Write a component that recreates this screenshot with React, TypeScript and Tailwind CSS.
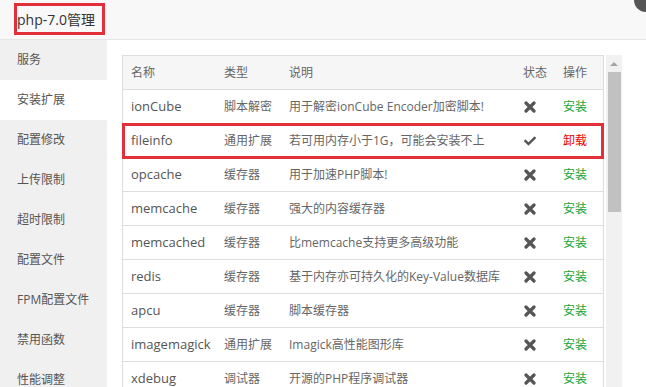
import { FaCheck } from "react-icons/fa";

const menu = ["服务", "安装扩展", "配置修改", "上传限制", "超时限制", "配置文件", "FPM配置文件", "禁用函数", "性能调整"];

const rows = [
  { name: "ionCube", type: "脚本解密", desc: "用于解密ionCube Encoder加密脚本!", on: false },
  { name: "fileinfo", type: "通用扩展", desc: "若可用内存小于1G，可能会安装不上", on: true },
  { name: "opcache", type: "缓存器", desc: "用于加速PHP脚本!", on: false },
  { name: "memcache", type: "缓存器", desc: "强大的内容缓存器", on: false },
  { name: "memcached", type: "缓存器", desc: "比memcache支持更多高级功能", on: false },
  { name: "redis", type: "缓存器", desc: "基于内存亦可持久化的Key-Value数据库", on: false },
  { name: "apcu", type: "缓存器", desc: "脚本缓存器", on: false },
  { name: "imagemagick", type: "通用扩展", desc: "Imagick高性能图形库", on: false },
  { name: "xdebug", type: "调试器", desc: "开源的PHP程序调试器", on: false },
];

function RemoveIcon() {
  return (
    <svg width="12" height="12" viewBox="0 0 12 12">
      <path d="M2 2 L10 10 M10 2 L2 10" stroke="#555" strokeWidth="3.2" strokeLinecap="round" />
    </svg>
  );
}

export default function App() {
  return (
    <div
      className="relative w-[646px] h-[387px] overflow-hidden bg-white text-[12px] text-[#666]"
      style={{ fontFamily: '"Open Sans", "Noto Sans CJK SC", sans-serif' }}
    >
      <div className="h-[40px] bg-[#f8f8f8] border-b border-[#e6e6e6] flex items-start pt-[3px] pl-[14px]">
        <div className="border-[3px] border-[#e2303a] h-[32px] pl-0 pr-[7px] flex items-center text-[14px] text-[#333]">
          php-7.0管理
        </div>
      </div>
      <div className="absolute right-[-12px] top-[-12px] w-[24px] h-[24px] rounded-full bg-[#555]" />
      <div className="flex">
        <div className="w-[107px] h-[347px] bg-[#f0f0f0] shrink-0">
          {menu.map((m, i) => (
            <div
              key={m}
              className={`h-[40px] flex items-center pl-[17px] ${i === 1 ? "bg-white" : ""} text-[#555]`}
            >
              {m}
            </div>
          ))}
        </div>
        <div className="flex-1 pl-[15px] pt-[15px] flex">
          <div className="w-[482px] border border-[#ddd] border-b-0">
            <div className="flex h-[34px] items-center bg-[#f6f6f6] border-b border-[#ddd]">
              <div className="w-[92px] pl-[8px]">名称</div>
              <div className="w-[65px] pl-[9px]">类型</div>
              <div className="w-[234px] pl-[9px]">说明</div>
              <div className="w-[40px] pl-[9px]">状态</div>
              <div className="flex-1 pl-[9px]">操作</div>
            </div>
            {rows.map((r) => (
              <div
                key={r.name}
                className={`flex h-[34px] items-center ${
                  r.on ? "outline-[3px] outline-[#e2303a] -outline-offset-[2px] relative" : "border-b border-[#ddd]"
                }`}
              >
                <div className="w-[92px] pl-[8px] text-[13px] text-[#555]">{r.name}</div>
                <div className="w-[65px] pl-[9px]">{r.type}</div>
                <div className="w-[234px] pl-[9px] whitespace-nowrap">{r.desc}</div>
                <div className="w-[40px] pl-[10px] text-[#555]">
                  {r.on ? <FaCheck size={12} /> : <RemoveIcon />}
                </div>
                <div className={`flex-1 pl-[9px] ${r.on ? "text-[#e00]" : "text-[#20a53a]"}`}>
                  {r.on ? "卸载" : "安装"}
                </div>
              </div>
            ))}
          </div>
          <div className="ml-[2px] w-[16px] h-[332px] bg-[#f1f1f1] flex flex-col items-center">
            <div className="h-[17px] flex items-center justify-center">
              <div className="w-0 h-0 border-l-[4px] border-r-[4px] border-b-[4px] border-l-transparent border-r-transparent border-b-[#a3a3a3]" />
            </div>
            <div className="w-[13px] h-[140px] bg-[#c1c1c1]" />
          </div>
        </div>
      </div>
    </div>
  );
}
